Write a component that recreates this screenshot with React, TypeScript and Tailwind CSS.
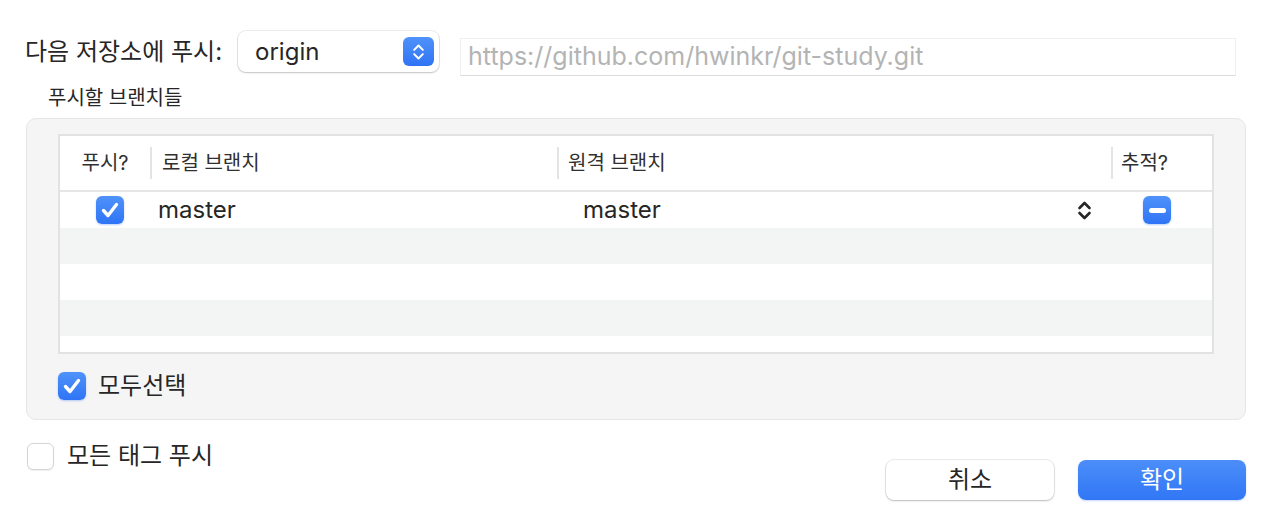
const CheckBox = ({ checked, size = 28 }: { checked: boolean; size?: number }) => {
  if (!checked) {
    return (
      <div
        className="rounded-[6px] border border-[#d4d4d4] bg-white shadow-[0_1px_1px_rgba(0,0,0,0.06)]"
        style={{ width: size, height: size }}
      />
    )
  }
  return (
    <div
      className="flex items-center justify-center rounded-[6px] bg-gradient-to-b from-[#4f92fa] to-[#2f74f5] shadow-[0_1px_2px_rgba(40,100,240,0.3)]"
      style={{ width: size, height: size }}
    >
      <svg width="28" height="28" viewBox="0 0 28 28" fill="none">
        <path d="M7.5 14.5 L12 19.5 L20.5 8.5" stroke="white" strokeWidth="3.4" strokeLinecap="round" strokeLinejoin="round" />
      </svg>
    </div>
  )
}

const MinusBox = () => (
  <div className="flex size-[28px] items-center justify-center rounded-[6px] bg-gradient-to-b from-[#4f92fa] to-[#2f74f5] shadow-[0_1px_2px_rgba(40,100,240,0.3)]">
    <div className="h-[5px] w-[17px] rounded-full bg-white" />
  </div>
)

const UpDown = ({ color, w, h, sw }: { color: string; w: number; h: number; sw: number }) => (
  <svg width={w} height={h} viewBox="0 0 15 21" fill="none">
    <path d="M2.5 8 L7.5 3 L12.5 8" stroke={color} strokeWidth={sw} strokeLinecap="round" strokeLinejoin="round" />
    <path d="M2.5 13 L7.5 18 L12.5 13" stroke={color} strokeWidth={sw} strokeLinecap="round" strokeLinejoin="round" />
  </svg>
)

const HeaderSep = () => <div className="h-[32px] w-[2px] shrink-0 bg-[#e4e4e4]" />

export default function App() {
  const rows = [0, 1, 2, 3, 4]

  return (
    <div className="h-[528px] w-[1278px] overflow-hidden bg-white pl-[26px] pr-[32px] pt-[31px] font-[Inter,'Noto_Sans_CJK_KR',sans-serif] text-[#262626]">

      {/* remote selection */}
      <div className="flex items-start">
        <div className="flex h-[41px] items-center text-[24px] -ml-px">다음 저장소에 푸시:</div>
        <div className="ml-[16px] flex h-[41px] w-[201px] items-center justify-between rounded-[8px] bg-white pl-[17px] pr-[5px] shadow-[0_0_0_1px_rgba(0,0,0,0.07),0_1px_2px_rgba(0,0,0,0.18)]">
          <span className="text-[24px]">origin</span>
          <div className="flex h-[29px] w-[31px] items-center justify-center rounded-[6px] bg-gradient-to-b from-[#4f92fa] to-[#2f74f5]">
            <UpDown color="white" w={13} h={20} sw={2.3} />
          </div>
        </div>
        <div className="ml-[21px] mt-[7px] flex h-[38px] w-[776px] items-center border border-[#efefef] border-b-[#dcdcdc] bg-white pl-[7px] text-[25px] text-[#b4b4b4]">
          https://github.com/hwinkr/git-study.git
        </div>
      </div>

      <div className="ml-[22px] mt-[12px] text-[20px] leading-[20px]">푸시할 브랜치들</div>

      {/* branches group */}
      <div className="mt-[10px] flex h-[302px] w-[1220px] flex-col rounded-[10px] border border-[#e6e6e6] bg-[#f5f5f5] pl-[31px] pt-[15px]">
        <div className="flex h-[220px] w-[1156px] flex-col overflow-hidden border-2 border-[#e2e2e2] bg-white">
          <div className="flex h-[54px] shrink-0 items-center text-[20px] text-[#303030]">
            <div className="w-[90px] text-center">푸시?</div>
            <HeaderSep />
            <div className="w-[405px] pl-[10px]">로컬 브랜치</div>
            <HeaderSep />
            <div className="w-[552px] pl-[9px]">원격 브랜치</div>
            <HeaderSep />
            <div className="flex-1 pl-[8px]">추적?</div>
          </div>
          <div className="h-[2px] shrink-0 bg-[#e6e6e6]" />
          {rows.map((r) =>
            r === 0 ? (
              <div key={r} className="flex h-[36px] shrink-0 items-center text-[24px]">
                <div className="w-[90px] pl-[36px]">
                  <CheckBox checked />
                </div>
                <div className="w-[407px] pl-[8px]">master</div>
                <div className="flex w-[554px] items-center justify-between pl-[26px] pr-[19px]">
                  <span>master</span>
                  <UpDown color="#262626" w={15} h={21} sw={2.6} />
                </div>
                <div className="flex-1 pl-[32px]">
                  <MinusBox />
                </div>
              </div>
            ) : (
              <div key={r} className={r % 2 === 1 ? "h-[36px] shrink-0 bg-[#f3f4f4]" : "h-[36px] shrink-0 bg-white"} />
            )
          )}
        </div>

        <div className="mt-[14px] flex items-center gap-[12px]">
          <CheckBox checked />
          <span className="text-[24px]">모두선택</span>
        </div>
      </div>

      {/* footer */}
      <div className="flex items-start justify-between">
        <div className="ml-px mt-[18px] flex items-center gap-[13px]">
          <CheckBox checked={false} size={27} />
          <span className="text-[24px]">모든 태그 푸시</span>
        </div>
        <div className="mt-[40px] flex gap-[24px]">
          <button className="flex h-[40px] w-[168px] items-center justify-center rounded-[8px] bg-white text-[24px] text-[#262626] shadow-[0_0_0_1px_rgba(0,0,0,0.08),0_1px_2px_rgba(0,0,0,0.2)]">
            취소
          </button>
          <button className="flex h-[40px] w-[168px] items-center justify-center rounded-[8px] bg-gradient-to-b from-[#4b8ef9] to-[#3176f5] text-[24px] text-white shadow-[0_1px_2px_rgba(40,100,240,0.25)]">
            확인
          </button>
        </div>
      </div>
    </div>
  )
}
